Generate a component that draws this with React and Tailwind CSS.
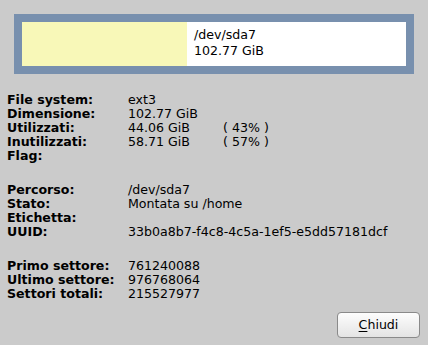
import React from 'react';

const rows1 = [
    ['File system:', 'ext3', ''],
    ['Dimensione:', '102.77 GiB', ''],
    ['Utilizzati:', '44.06 GiB', '( 43% )'],
    ['Inutilizzati:', '58.71 GiB', '( 57% )'],
    ['Flag:', '', ''],
];

const rows2 = [
    ['Percorso:', '/dev/sda7'],
    ['Stato:', 'Montata su /home'],
    ['Etichetta:', ''],
    ['UUID:', '33b0a8b7-f4c8-4c5a-1ef5-e5dd57181dcf'],
];

const rows3 = [
    ['Primo settore:', '761240088'],
    ['Ultimo settore:', '976768064'],
    ['Settori totali:', '215527977'],
];

const InfoGrid = ({ rows, className = '' }) => (
    <div className={`grid grid-cols-[121px_95px_1fr] leading-[14px] ${className}`}>
        {rows.map(([label, value, extra]) => (
            <React.Fragment key={label}>
                <span className="font-bold whitespace-nowrap">{label}</span>
                <span className="whitespace-nowrap">{value}</span>
                <span className="whitespace-nowrap">{extra || ''}</span>
            </React.Fragment>
        ))}
    </div>
);

export default function App() {
    return (
        <div
            className="w-[428px] h-[345px] bg-[#cbcbcb] text-black text-[12.6px] flex flex-col overflow-hidden"
            style={{ fontFamily: '"DejaVu Sans", sans-serif' }}
        >
            {/* Partition bar */}
            <div className="mt-[14px] ml-[14px] w-[400px] h-[60px] border-[8px] border-[#7890ae] bg-white flex">
                <div className="w-[165px] h-full bg-[#f8f8b8]" />
                <div className="pl-[7px] pt-[5px] leading-[16px]">
                    <div>/dev/sda7</div>
                    <div>102.77 GiB</div>
                </div>
            </div>

            {/* Details */}
            <div className="pl-[7px] mt-[19px]">
                <InfoGrid rows={rows1} />
                <InfoGrid rows={rows2} className="mt-[20px]" />
                <InfoGrid rows={rows3} className="mt-[20px]" />
            </div>

            {/* Footer */}
            <div className="mt-auto flex justify-end pr-[8px] pb-[7px]">
                <button className="w-[83px] h-[26px] rounded-[4px] border border-[#8a8a8a] bg-gradient-to-b from-[#fdfdfd] to-[#e4e4e4] text-[12.6px] leading-none">
                    <span className="underline underline-offset-2">C</span>hiudi
                </button>
            </div>
        </div>
    );
}
